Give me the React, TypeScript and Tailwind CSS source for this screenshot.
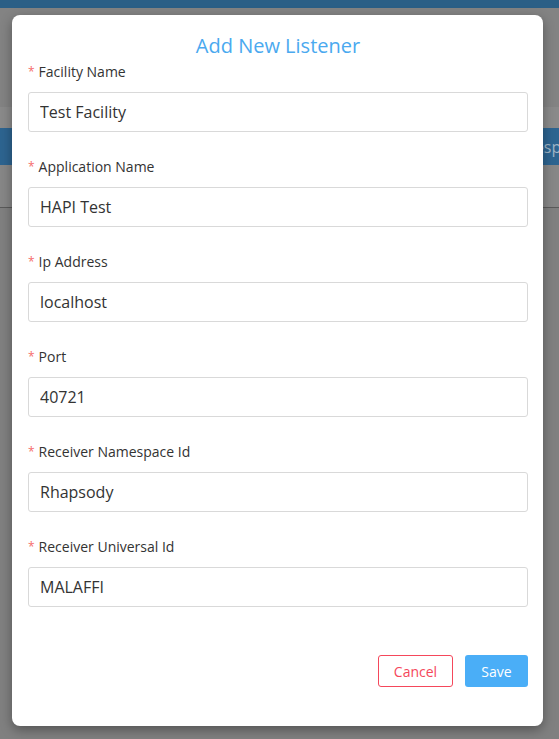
import React from "react";

type Field = { label: string; value: string };

const fields: Field[] = [
  { label: "Facility Name", value: "Test Facility" },
  { label: "Application Name", value: "HAPI Test" },
  { label: "Ip Address", value: "localhost" },
  { label: "Port", value: "40721" },
  { label: "Receiver Namespace Id", value: "Rhapsody" },
  { label: "Receiver Universal Id", value: "MALAFFI" },
];

function FormField({ label, value }: Field) {
  return (
    <div className="mb-[25px]">
      <label className="flex h-5 items-center text-[14px] leading-5 text-[#333333]">
        <span className="mr-[4px] text-[12px] text-[#f56c6c]">*</span>
        {label}
      </label>
      <input
        readOnly
        value={value}
        className="mt-[10px] box-border block h-10 w-full rounded-[3px] border border-[#d9d9d9] bg-white px-[11px] text-[16px] text-[#333333] outline-none"
      />
    </div>
  );
}

export default function App() {
  return (
    <div
      className="relative h-[739px] w-[559px] overflow-hidden bg-[#808080]"
      style={{ fontFamily: '"Open Sans", "Noto Sans", sans-serif' }}
    >
      {/* dimmed page behind the dialog */}
      <div className="h-2 bg-[#2b5f86]" />
      <div className="h-[99px] bg-[#838383]" />
      <div className="h-[21px] bg-[#8a8a8a]" />
      <div className="flex h-[37px] items-center bg-[#2d6490] pl-[525px] text-[16px] text-[#9fb4c6]">
        Resp
      </div>
      <div className="h-[43px] border-b border-[#5a5a5a] bg-[#878787]" />

      {/* dialog */}
      <div className="absolute left-[12px] top-[15px] h-[711px] w-[531px] rounded-[8px] bg-white pl-4 pr-[15px] pt-[17px] shadow-[0_4px_12px_rgba(0,0,0,0.35)]">
        <h2 className="mb-[2px] text-center text-[20px] leading-7 font-normal text-[#4aa9ef]">
          Add New Listener
        </h2>
        {fields.map((f) => (
          <FormField key={f.label} {...f} />
        ))}
        <div className="mt-[48px] flex justify-end gap-[12px]">
          <button className="h-8 w-[75px] rounded-[3px] border border-[#f5475b] bg-white text-[14px] text-[#f5475b]">
            Cancel
          </button>
          <button className="h-8 w-[63px] rounded-[3px] bg-[#4aaef7] text-[14px] text-white">
            Save
          </button>
        </div>
      </div>
    </div>
  );
}
